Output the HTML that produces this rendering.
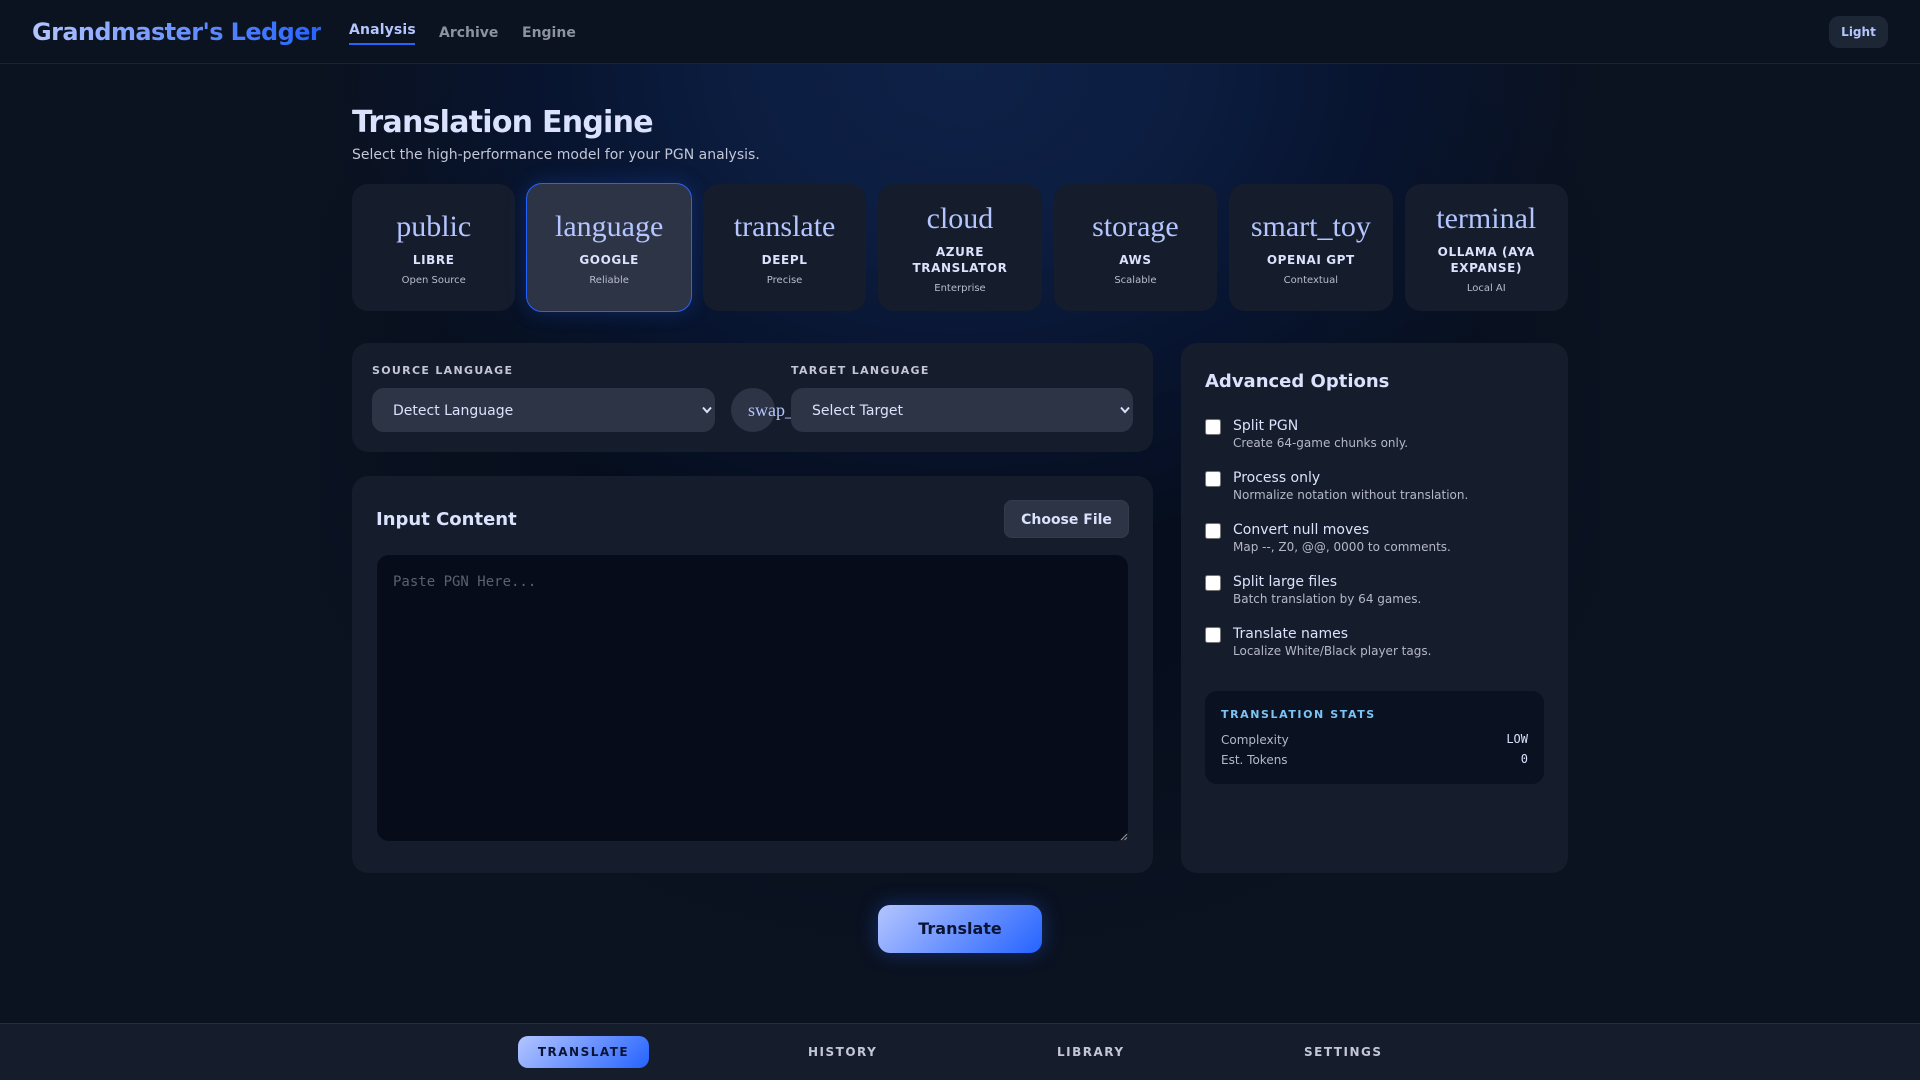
<!DOCTYPE html>
<html lang="en">
<head>
<meta charset="utf-8">
<title>Grandmaster's Ledger</title>
<style>
*{box-sizing:border-box;margin:0;padding:0}
html,body{width:1920px;height:1080px;overflow:hidden}
body{position:relative;background:#0b1220;font-family:"DejaVu Sans",sans-serif;color:#dae2fd}
.a{position:absolute;white-space:nowrap}
#bg{position:absolute;left:320px;top:64px;width:1280px;height:960px;background:
radial-gradient(ellipse 640px 500px at 640px 0,#0e2147 0,#0c1d40 35%,#081531 62%,rgba(6,14,30,0) 100%),
radial-gradient(ellipse 700px 560px at 640px 340px,#060d1c 0,#060e1d 50%,rgba(11,18,32,0) 100%)}
header{position:absolute;left:0;top:0;width:1920px;height:64px;background:#0b1220;border-bottom:1px solid #1c2330}
.logo{left:32px;top:17px;font-size:24px;font-weight:700;line-height:30px;letter-spacing:-.6px;background:linear-gradient(90deg,#b4c5ff,#2563ff);-webkit-background-clip:text;background-clip:text;color:transparent}
.nav{font-size:14px;font-weight:600;line-height:20px;color:#8d92a3}
.card{position:absolute;top:184px;width:163.43px;height:127px;border-radius:16px;background:#151c2b;text-align:center;display:flex;flex-direction:column;align-items:center;justify-content:center;padding:2px 12px 0}
.card.on{background:#2d3446;border:1px solid #2563ff;box-shadow:0 0 20px rgba(37,99,255,.25);top:183px;height:129px;left:526.43px;width:165.43px}
.card i{font:normal 30px/36px "Liberation Serif",serif;color:#b4c5ff;margin-bottom:7px;height:36px}
.card b{font-size:12px;font-weight:700;line-height:16px;letter-spacing:.6px;color:#dae2fd;display:block}
.card span{font-size:10px;line-height:14px;color:#b9bdcc;margin-top:6px;display:block}
.panel{position:absolute;background:#151c2b;border-radius:16px}
.lab{font-size:11px;font-weight:700;line-height:16px;letter-spacing:1.32px;color:#c3c6d7}
.sel{position:absolute;top:388px;height:44px;background:#2d3446;border-radius:12px;font-size:14px;line-height:46px;padding-left:21px;color:#dae2fd;z-index:2}
.sel svg{position:absolute;right:3px;top:18px}
.cb{position:absolute;left:1205px;width:16px;height:16px;background:#fff;border:1px solid #767676;border-radius:2.5px}
.t1{left:1233px;font-size:14px;line-height:20px;color:#dae2fd}
.t2{left:1233px;font-size:12px;line-height:16px;color:#b4b8c7}
.prim{background:linear-gradient(135deg,#b4c5ff,#2563ff)}
.bn{font-size:12px;font-weight:700;line-height:16px;letter-spacing:1.5px;color:#c3c6d7;top:1044px}
</style>
</head>
<body>
<div id="bg"></div>
<header>
<div class="a logo">Grandmaster's Ledger</div>
<div class="a nav" style="left:349px;top:20px;color:#b4c5ff;font-weight:700;letter-spacing:.15px">Analysis</div>
<div class="a" style="left:349px;top:43px;width:66px;height:2px;background:#2563ff"></div>
<div class="a nav" style="left:439px;top:23px">Archive</div>
<div class="a nav" style="left:522px;top:23px">Engine</div>
<div class="a" style="left:1829px;top:16px;width:59px;height:32px;border-radius:10px;background:#1d2635;color:#b4c5ff;font-size:12px;font-weight:700;line-height:32px;text-align:center">Light</div>
</header>

<div class="a" style="left:352px;top:105px;font-size:30px;font-weight:700;line-height:36px;letter-spacing:-.75px;color:#dae2fd">Translation Engine</div>
<div class="a" style="left:352px;top:145px;font-size:14px;line-height:20px;color:#c3c6d7">Select the high-performance model for your PGN analysis.</div>

<div class="card" style="left:352px"><i>public</i><b>LIBRE</b><span>Open Source</span></div>
<div class="card on"><i>language</i><b>GOOGLE</b><span>Reliable</span></div>
<div class="card" style="left:702.86px"><i>translate</i><b>DEEPL</b><span>Precise</span></div>
<div class="card" style="left:878.29px"><i>cloud</i><b>AZURE<br>TRANSLATOR</b><span>Enterprise</span></div>
<div class="card" style="left:1053.71px"><i>storage</i><b>AWS</b><span>Scalable</span></div>
<div class="card" style="left:1229.14px"><i>smart_toy</i><b>OPENAI GPT</b><span>Contextual</span></div>
<div class="card" style="left:1404.57px"><i>terminal</i><b>OLLAMA (AYA<br>EXPANSE)</b><span>Local AI</span></div>

<div class="panel" style="left:352px;top:343px;width:801px;height:109px"></div>
<div class="a lab" style="left:372px;top:362.500px">SOURCE LANGUAGE</div>
<div class="a lab" style="left:791px;top:362.500px">TARGET LANGUAGE</div>
<div class="sel" style="left:372px;width:343px">Detect Language<svg width="10" height="8" viewBox="0 0 10 8"><path d="M1 1.500 5 6l4-4.500" fill="none" stroke="#dae2fd" stroke-width="2"/></svg></div>
<div class="a" style="left:731px;top:388px;width:44px;height:44px;border-radius:50%;background:#2d3446"></div>
<div class="a" style="left:748px;top:398px;font:18px/24px 'Liberation Serif',serif;color:#b4c5ff">swap_horiz</div>
<div class="sel" style="left:791px;width:342px">Select Target<svg width="10" height="8" viewBox="0 0 10 8"><path d="M1 1.500 5 6l4-4.500" fill="none" stroke="#dae2fd" stroke-width="2"/></svg></div>

<div class="panel" style="left:352px;top:476px;width:801px;height:397px"></div>
<div class="a" style="left:376px;top:505.500px;font-size:18px;font-weight:700;line-height:28px;color:#dae2fd">Input Content</div>
<div class="a" style="left:1004px;top:500px;width:125px;height:38px;border-radius:8px;background:#2d3446;border:1px solid #333b4d;color:#dae2fd;font-size:14px;font-weight:700;line-height:38px;text-align:center">Choose File</div>
<div class="a" style="left:377px;top:555px;width:751px;height:286px;border-radius:12px;background:#060c1a"></div>
<div class="a" style="left:393px;top:572px;font:14px/21px 'DejaVu Sans Mono',monospace;color:#5b6070">Paste PGN Here...</div>
<svg class="a" style="left:1120px;top:833px" width="8" height="8" viewBox="0 0 8 8"><path d="M1 7 7 1M4.500 7 7 4.500" stroke="#9a9a9a" stroke-width="1"/></svg>

<div class="panel" style="left:1181px;top:343px;width:387px;height:530px"></div>
<div class="a" style="left:1205px;top:367.500px;font-size:18px;font-weight:700;line-height:28px;color:#dae2fd">Advanced Options</div>

<div class="cb" style="top:419px"></div><div class="a t1" style="top:416px">Split PGN</div><div class="a t2" style="top:435px">Create 64-game chunks only.</div>
<div class="cb" style="top:471px"></div><div class="a t1" style="top:468px">Process only</div><div class="a t2" style="top:487px">Normalize notation without translation.</div>
<div class="cb" style="top:523px"></div><div class="a t1" style="top:520px">Convert null moves</div><div class="a t2" style="top:539px">Map --, Z0, @@, 0000 to comments.</div>
<div class="cb" style="top:575px"></div><div class="a t1" style="top:572px">Split large files</div><div class="a t2" style="top:591px">Batch translation by 64 games.</div>
<div class="cb" style="top:627px"></div><div class="a t1" style="top:624px">Translate names</div><div class="a t2" style="top:643px">Localize White/Black player tags.</div>

<div class="a" style="left:1205px;top:691px;width:339px;height:93px;border-radius:12px;background:#0a1120"></div>
<div class="a" style="left:1221px;top:707px;font-size:11px;font-weight:700;line-height:16px;letter-spacing:1.58px;color:#7cc4f5">TRANSLATION STATS</div>
<div class="a t2" style="left:1221px;top:732px">Complexity</div>
<div class="a t2" style="left:1221px;top:752px">Est. Tokens</div>
<div class="a" style="right:392px;top:731px;font:12px/16px 'DejaVu Sans Mono',monospace;color:#dae2fd">LOW</div>
<div class="a" style="right:392px;top:751px;font:12px/16px 'DejaVu Sans Mono',monospace;color:#dae2fd">0</div>

<div class="a prim" style="left:878px;top:905px;width:164px;height:48px;border-radius:12px;box-shadow:0 0 20px rgba(37,99,255,.35);color:#0b1435;font-size:16px;font-weight:700;line-height:48px;text-align:center">Translate</div>

<div class="a" style="left:0;top:1023px;width:1920px;height:57px;background:#151c2b;border-top:1px solid #262d3b"></div>
<div class="a prim" style="left:518px;top:1036px;width:131px;height:32px;border-radius:10px;color:#0b1435;font-size:12px;font-weight:700;line-height:32px;letter-spacing:1.5px;text-align:center">TRANSLATE</div>
<div class="a bn" style="left:808px">HISTORY</div>
<div class="a bn" style="left:1057px">LIBRARY</div>
<div class="a bn" style="left:1304px">SETTINGS</div>
</body>
</html>
